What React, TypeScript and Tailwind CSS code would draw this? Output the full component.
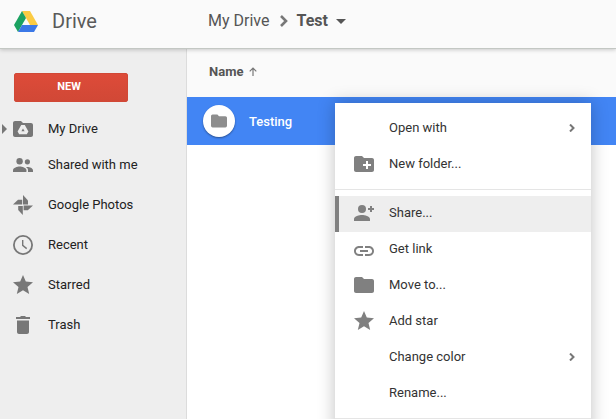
import type { ReactNode } from 'react';

function Icon({ children }: { children: ReactNode }) {
  return (
    <svg viewBox="0 0 24 24" className="size-6 shrink-0 fill-current" aria-hidden="true">
      {children}
    </svg>
  );
}

const FOLDER = 'M10 4H4c-1.1 0-2 .9-2 2v12c0 1.1.9 2 2 2h16c1.1 0 2-.9 2-2V8c0-1.1-.9-2-2-2h-8l-2-2z';
const STAR = 'M12 17.3l6.2 3.7-1.7-7L22 9.2l-7.2-.6L12 2 9.2 8.6 2 9.2 7.5 14l-1.7 7z';

const icons: Record<string, ReactNode> = {
  drive: (
    <>
      <path d={FOLDER} />
      <path
        d="M10.2 8h3.6l3.6 6.4-1.6 2.8H8.2l-1.6-2.8zM12 11.6l-1.6 2.7h3.2z"
        fill="#eee"
        fillRule="evenodd"
      />
    </>
  ),
  people: (
    <>
      <circle cx="8.6" cy="8.2" r="3.2" />
      <circle cx="16.4" cy="8.8" r="2.6" />
      <path d="M2 19v-1.8c0-2.4 4.4-3.7 6.7-3.7s6.7 1.3 6.7 3.7V19z" />
      <path d="M16.4 14c-.5 0-1 0-1.5.1 1.3.8 2.1 1.8 2.1 3.1V19h5v-1.6c0-2.2-3.4-3.4-5.6-3.4z" />
    </>
  ),
  photos: (
    <>
      <path d="M12 2l5 5.4V11.4h-5z" />
      <path d="M22 12.4l-5.2 4.8h-4.2v-4.8z" />
      <path d="M11.8 22l-4.6-5v-4h4.6z" />
      <path d="M2 11.6l5-4.8h4.2v4.8z" />
    </>
  ),
  clock: (
    <>
      <circle cx="12" cy="12" r="9.1" fill="none" stroke="currentColor" strokeWidth="1.8" />
      <path d="M11.7 7v5.4l4 3.2" fill="none" stroke="currentColor" strokeWidth="1.4" />
    </>
  ),
  star: <path d={STAR} />,
  trash: <path d="M6 7.5h12V19c0 1.1-.9 2-2 2H8c-1.1 0-2-.9-2-2zM5 4h4l1-1h4l1 1h4v2H5z" />,
  folder: <path d={FOLDER} />,
  newFolder: (
    <>
      <path d={FOLDER} />
      <path d="M14 9h2v3h3v2h-3v3h-2v-3h-3v-2h3z" fill="#fff" />
    </>
  ),
  share: (
    <>
      <circle cx="10" cy="8" r="4" />
      <path d="M2 20v-2c0-2.7 5.3-4 8-4s8 1.3 8 4v2zM18 5h2v2h2v2h-2v2h-2V9h-2V7h2z" />
    </>
  ),
  link: (
    <path d="M3.9 14c0-1.7 1.4-3.1 3.1-3.1h4V9H7c-2.8 0-5 2.2-5 5s2.2 5 5 5h4v-1.9H7c-1.7 0-3.1-1.4-3.1-3.1zM8 15h8v-2H8v2zm9-6h-4v1.9h4c1.7 0 3.1 1.4 3.1 3.1s-1.4 3.1-3.1 3.1h-4V19h4c2.8 0 5-2.2 5-5s-2.2-5-5-5z" />
  ),
};

const navItems = [
  { label: 'Shared with me', icon: 'people' },
  { label: 'Google Photos', icon: 'photos' },
  { label: 'Recent', icon: 'clock' },
  { label: 'Starred', icon: 'star' },
  { label: 'Trash', icon: 'trash' },
];

type MenuEntry = { label: string; icon?: string; submenu?: boolean; active?: boolean };

const menuGroups: MenuEntry[][] = [
  [
    { label: 'Open with', submenu: true },
    { label: 'New folder...', icon: 'newFolder' },
  ],
  [
    { label: 'Share...', icon: 'share', active: true },
    { label: 'Get link', icon: 'link' },
    { label: 'Move to...', icon: 'folder' },
    { label: 'Add star', icon: 'star' },
    { label: 'Change color', submenu: true },
    { label: 'Rename...' },
  ],
];

function Logo() {
  return (
    <svg viewBox="0 0 24 21" className="h-[21px] w-6" aria-hidden="true">
      <path d="M8 0h8l8 14h-8z" fill="#fbcb43" />
      <path d="M8 0l4 7-8 14-4-7z" fill="#1ba261" />
      <path d="M8 14h16l-4 7H4z" fill="#3b78e7" />
    </svg>
  );
}

function Header() {
  return (
    <header className="relative z-10 flex h-12 shrink-0 items-center bg-[#fafafa] pb-1.5 shadow-[0_1px_0_#c3c7c3,0_2px_4px_rgba(0,0,0,0.2)]">
      <div className="flex w-[208px] shrink-0 items-center gap-[14px] pl-[14px]">
        <Logo />
        <h1 className="text-xl text-[#5a5a5a]">Drive</h1>
      </div>
      <nav className="flex items-center text-base text-[#555]">
        <a href="#my-drive">My Drive</a>
        <svg viewBox="0 0 8 12" className="mr-2 ml-[11px] h-3 w-2" aria-hidden="true">
          <path d="M1 1l5 5-5 5" fill="none" stroke="#777" strokeWidth="2.6" />
        </svg>
        <button type="button" className="flex items-center gap-2 font-bold">
          Test
          <svg viewBox="0 0 10 5" className="h-[5px] w-[10px] fill-[#555]" aria-hidden="true">
            <path d="M0 0h10L5 5z" />
          </svg>
        </button>
      </nav>
    </header>
  );
}

function Sidebar() {
  return (
    <aside className="w-[187px] shrink-0 border-r border-[#dcdcdc] bg-[#eee] pt-[25px]">
      <button
        type="button"
        className="ml-[14px] block h-[29px] w-[114px] rounded-xs border border-[#d14836] bg-linear-to-b from-[#dd4b39] to-[#d14836] pr-1 text-[11px] font-bold text-white"
      >
        NEW
      </button>
      <nav className="mt-[7px] text-[13px] text-[#222]">
        <a href="#my-drive" className="flex h-9 items-center pt-1">
          <svg viewBox="0 0 5 10" className="mr-1 ml-0.5 h-[10px] w-[5px] fill-[#777]" aria-hidden="true">
            <path d="M0 0l5 5-5 5z" />
          </svg>
          <span className="mr-[13px] text-[#777]">
            <Icon>{icons.drive}</Icon>
          </span>
          My Drive
        </a>
        {navItems.map((item) => (
          <a key={item.label} href="#" className="flex h-10 items-center pl-[11px]">
            <span className="mr-[13px] text-[#777]">
              <Icon>{icons[item.icon]}</Icon>
            </span>
            {item.label}
          </a>
        ))}
      </nav>
    </aside>
  );
}

function Chevron() {
  return (
    <svg viewBox="0 0 6 8" className="ml-auto h-2 w-1.5" aria-hidden="true">
      <path d="M1 .5L4.5 4 1 7.5" fill="none" stroke="#777" strokeWidth="2" />
    </svg>
  );
}

function ContextMenu() {
  return (
    <div
      role="menu"
      className="absolute top-[6px] left-[148px] w-64 bg-white pt-0.5 shadow-[0_0_16px_rgba(0,0,0,0.25)]"
    >
      {menuGroups.map((group, i) => (
        <div key={i} className="border-b border-[#e5e5e5] py-1.5">
          {group.map((item) => (
            <button
              key={item.label}
              type="button"
              role="menuitem"
              className={`flex h-9 w-full items-center border-l-4 pr-4 pb-0.5 pl-[13px] text-[13px] text-[#333] ${
                item.active ? 'border-[#808080] bg-[#eee]' : 'border-transparent'
              }`}
            >
              <span className="mr-[13px] size-6 text-[#808080]">
                {item.icon && <Icon>{icons[item.icon]}</Icon>}
              </span>
              {item.label}
              {item.submenu && <Chevron />}
            </button>
          ))}
        </div>
      ))}
      <div className="h-9" />
    </div>
  );
}

function FileList() {
  return (
    <main className="min-w-0 flex-1 bg-white">
      <table className="w-full text-left text-[13px]">
        <thead>
          <tr className="h-[49px] bg-[#fafafa] text-[#555]">
            <th className="px-[22px] pb-0.5 font-bold">
              <span className="flex items-center gap-1.5">
                Name
                <svg viewBox="0 0 8 9" className="h-[9px] w-2" aria-hidden="true">
                  <path d="M4 9V1M.7 4.3L4 1l3.3 3.3" fill="none" stroke="#777" strokeWidth="1.2" />
                </svg>
              </span>
            </th>
          </tr>
        </thead>
        <tbody>
          <tr className="h-12 bg-[#4285f4] text-white">
            <td className="pl-4 font-medium">
              <span className="flex items-center gap-[14px]">
                <span className="flex size-8 items-center justify-center rounded-full bg-white shadow-[0_1px_2px_rgba(0,0,0,0.4)]">
                  <svg viewBox="2 4 20 16" className="h-[14px] w-4 fill-[#8e8e8e]" aria-hidden="true">
                    <path d={FOLDER} />
                  </svg>
                </span>
                <span className="pt-0.5">Testing</span>
              </span>
            </td>
          </tr>
        </tbody>
      </table>
      <div className="relative -mt-12">
        <ContextMenu />
      </div>
    </main>
  );
}

export default function App() {
  return (
    <div className="flex h-screen flex-col overflow-hidden bg-white font-[Roboto,sans-serif]">
      <Header />
      <div className="flex flex-1">
        <Sidebar />
        <FileList />
      </div>
    </div>
  );
}
